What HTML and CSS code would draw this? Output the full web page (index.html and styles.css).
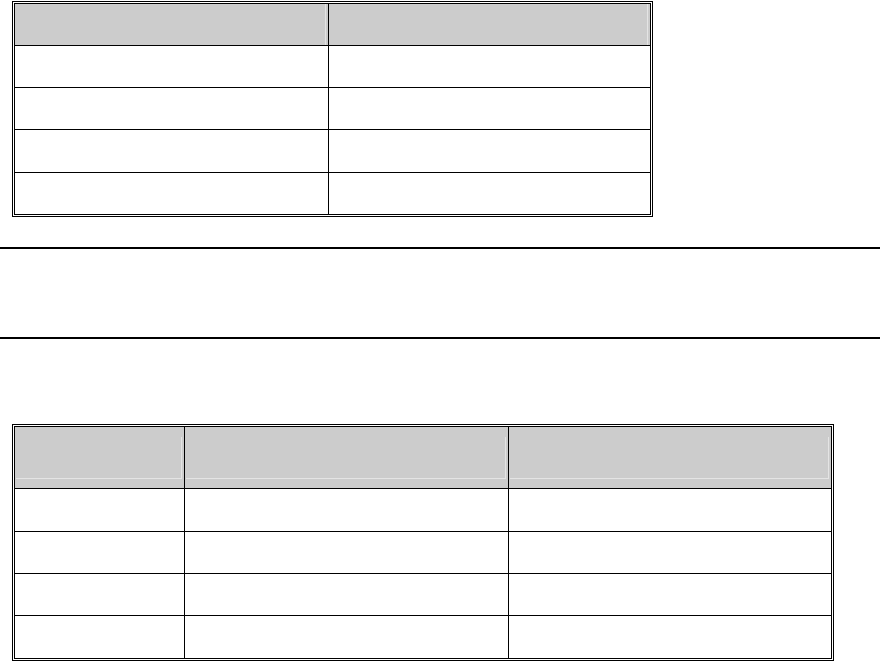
FILE: index.html
```html
<!DOCTYPE html>
<html>
<head>
<meta charset="utf-8">
<link rel="stylesheet" href="styles.css">
</head>
<body>
<div class="page">
  <div class="grid grid-a">
    <div class="cell head"><div class="bevel-a"></div></div>
    <div class="cell head last-col"><div class="bevel-a"></div></div>
    <div class="cell"></div><div class="cell last-col"></div>
    <div class="cell"></div><div class="cell last-col"></div>
    <div class="cell"></div><div class="cell last-col"></div>
    <div class="cell last-row"></div><div class="cell last-col last-row"></div>
  </div>

  <div class="rule rule-1"></div>
  <div class="rule rule-2"></div>

  <div class="grid grid-b">
    <div class="cell head"><div class="bevel-b"></div></div>
    <div class="cell head"><div class="bevel-b"></div></div>
    <div class="cell head last-col"><div class="bevel-b"></div></div>
    <div class="cell"></div><div class="cell"></div><div class="cell last-col"></div>
    <div class="cell"></div><div class="cell"></div><div class="cell last-col"></div>
    <div class="cell"></div><div class="cell"></div><div class="cell last-col"></div>
    <div class="cell last-row"></div><div class="cell last-row"></div><div class="cell last-col last-row"></div>
  </div>
</div>
</body>
</html>
```

FILE: styles.css
```css
html, body {
  margin: 0;
  padding: 0;
  background: #ffffff;
  font-family: "Liberation Sans", Arial, sans-serif;
}

.page {
  display: flex;
  flex-direction: column;
  align-items: flex-start;
  width: 882px;
  height: 661px;
  overflow: hidden;
}

.grid {
  display: grid;
  border: 3px double #000000;
  box-sizing: border-box;
  margin-left: 12px;
}

.grid-a {
  margin-top: 1px;
  width: 641px;
  grid-template-columns: 314px 321px;
  grid-template-rows: 42px 42px 42px 43px 41px;
}

.grid-b {
  margin-top: 85px;
  width: 822px;
  grid-template-columns: 170px 324px 322px;
  grid-template-rows: 62px 43px 42px 42px 42px;
}

.cell {
  border-right: 1px solid #000000;
  border-bottom: 1px solid #000000;
  background: #ffffff;
  display: flex;
}

.cell.last-col {
  border-right: none;
}

.cell.last-row {
  border-bottom: none;
}

.cell.head {
  background: #cccccc;
}

.bevel-a {
  flex: 1;
  margin-right: 2px;
  border-right: 1px solid #e4e4e4;
}

.bevel-b {
  flex: 1;
  margin: 10px 2px 9px 1px;
  border-right: 1px solid #e4e4e4;
  border-bottom: 1px solid #e4e4e4;
}

.rule {
  width: 880px;
  height: 2px;
  background: #000000;
}

.rule-1 {
  margin-top: 30px;
}

.rule-2 {
  margin-top: 88px;
}
```
